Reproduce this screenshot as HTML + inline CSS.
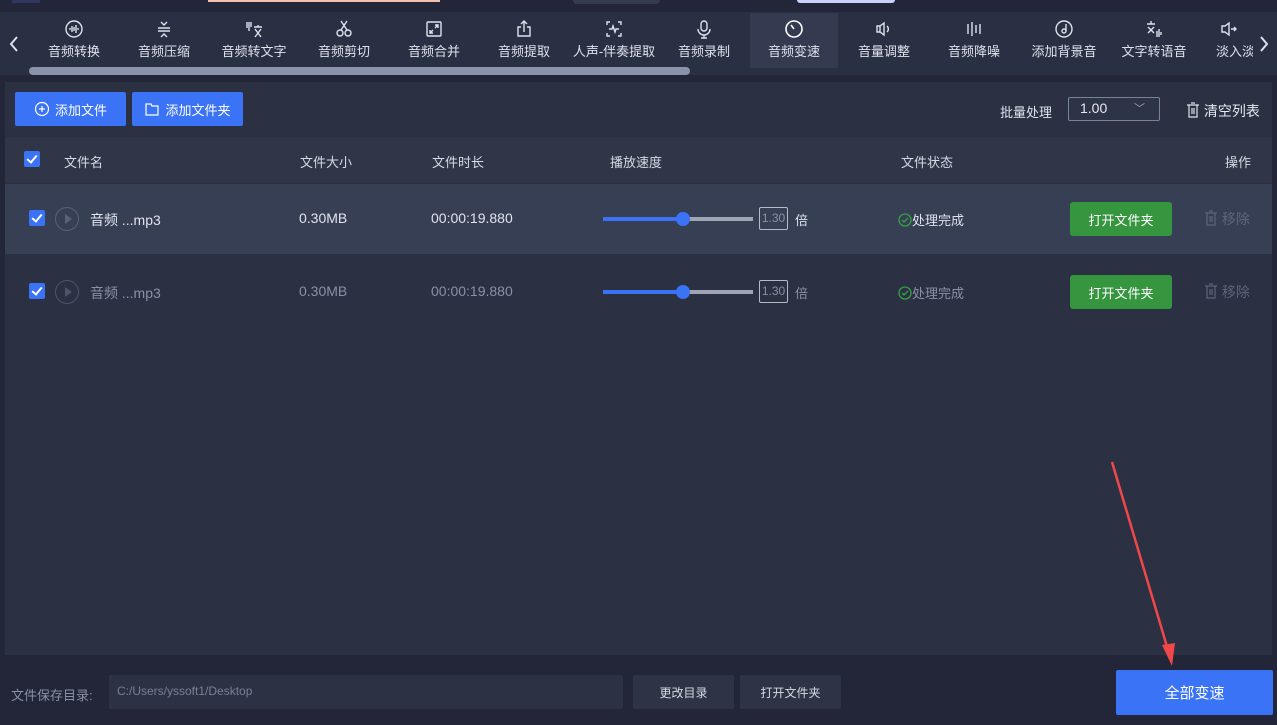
<!DOCTYPE html><html><head><meta charset="utf-8"><style>
*{margin:0;padding:0;box-sizing:border-box}
body{width:1277px;height:725px;background:#222638;font-family:"Liberation Sans","Noto Sans CJK SC",sans-serif;position:relative;overflow:hidden;color:#e6e9f0;font-size:13px;white-space:nowrap}
.a{position:absolute}
.tb{left:0;top:12px;width:1277px;height:63px;background:#2a3044}
.it{position:absolute;top:13px;width:90px;height:56px;text-align:center;color:#dde2ec;font-size:13px}
.it svg{display:block;margin:6px auto 2px}
.sel{background:#343b50}
.panel{left:5px;top:82px;width:1267px;height:573px;background:#2b3043}
.btn{background:#3a73f5;color:#fff;border-radius:2px;font-size:13px;display:flex;align-items:center;justify-content:center}
.cb{width:16px;height:16px;background:#3a73f5;border-radius:2px}
.cb:after{content:"";position:absolute;left:5px;top:2px;width:4px;height:8px;border:solid #fff;border-width:0 2px 2px 0;transform:rotate(40deg)}
.hd{color:#d5dae4;font-size:13px}
.green{background:#35963f;color:#fff;border-radius:3px;display:flex;align-items:center;justify-content:center;font-size:13px}
.gb{background:#2e3346;border-radius:2px;display:flex;align-items:center;justify-content:center;font-size:12px;color:#d5dae4}
</style></head><body>
<div class="a" style="left:12px;top:0;width:28px;height:3px;background:#2f3760"></div>
<div class="a" style="left:208px;top:0;width:232px;height:2px;background:#f3c0b0"></div>
<div class="a" style="left:573px;top:0;width:87px;height:4px;background:#363b4e;border-radius:0 0 4px 4px"></div>
<div class="a" style="left:797px;top:0;width:98px;height:3px;background:#c8d2fb;border-radius:0 0 4px 4px"></div>
<div class="a tb"></div>
<svg class="a" style="left:8px;top:35px" width="12" height="18" viewBox="0 0 12 18" fill="none" stroke="#dde2ec" stroke-width="2"><path d="M9 2L3 9l6 7"/></svg>
<svg class="a" style="left:1258px;top:35px" width="12" height="18" viewBox="0 0 12 18" fill="none" stroke="#dde2ec" stroke-width="2"><path d="M3 2l6 7-6 7"/></svg>
<div class="it" style="left:29px"><svg width="20" height="20" viewBox="0 0 20 20" fill="none" stroke="#dde2ec" stroke-width="1.4"><circle cx="10" cy="10" r="8"/><path d="M6 9v2M8 7v6M10 8v4M12 6v8M14 9v2"/></svg>音频转换</div>
<div class="it" style="left:119px"><svg width="20" height="20" viewBox="0 0 20 20" fill="none" stroke="#dde2ec" stroke-width="1.4"><path d="M4 9h12M4 12h12M7 3l3 3 3-3M7 18l3-3 3 3"/></svg>音频压缩</div>
<div class="it" style="left:209px"><svg width="20" height="20" viewBox="0 0 20 20" fill="none" stroke="#dde2ec" stroke-width="1.4"><path d="M3 3v6M5 3v9M7 3v5M10 8h8M14 6v2M11 10l6 8M17 10l-6 8"/></svg>音频转文字</div>
<div class="it" style="left:299px"><svg width="20" height="20" viewBox="0 0 20 20" fill="none" stroke="#dde2ec" stroke-width="1.4"><circle cx="6" cy="14" r="3"/><circle cx="14" cy="14" r="3"/><path d="M7 11L13 2M13 11L7 2"/></svg>音频剪切</div>
<div class="it" style="left:389px"><svg width="20" height="20" viewBox="0 0 20 20" fill="none" stroke="#dde2ec" stroke-width="1.4"><rect x="3" y="3" width="14" height="14" rx="1"/><path d="M6 14l3-3M6 11v3h3M14 6l-3 3M14 9V6h-3"/></svg>音频合并</div>
<div class="it" style="left:479px"><svg width="20" height="20" viewBox="0 0 20 20" fill="none" stroke="#dde2ec" stroke-width="1.4"><path d="M7 8H4v9h12V8h-3M10 13V2M7 5l3-3 3 3"/></svg>音频提取</div>
<div class="it" style="left:569px"><svg width="20" height="20" viewBox="0 0 20 20" fill="none" stroke="#dde2ec" stroke-width="1.4"><path d="M3 6V3h3M14 3h3v3M3 14v3h3M14 17h3v-3M5 10h3l1-3 2 6 1-3h3"/></svg>人声-伴奏提取</div>
<div class="it" style="left:659px"><svg width="20" height="20" viewBox="0 0 20 20" fill="none" stroke="#dde2ec" stroke-width="1.4"><rect x="7" y="2" width="6" height="10" rx="3"/><path d="M4 10a6 6 0 0012 0M10 16v3M7 19h6"/></svg>音频录制</div>
<div class="it sel" style="left:750px;width:88px;top:13px;height:55px"><svg width="20" height="20" viewBox="0 0 20 20" fill="none" stroke="#fff" stroke-width="1.6"><circle cx="10" cy="10" r="8"/><path d="M7 6l3 4"/></svg>音频变速</div>
<div class="it" style="left:839px"><svg width="20" height="20" viewBox="0 0 20 20" fill="none" stroke="#dde2ec" stroke-width="1.4"><path d="M3 7h3l4-3v12l-4-3H3zM13 7a4 4 0 010 6M6 7v6"/></svg>音量调整</div>
<div class="it" style="left:929px"><svg width="20" height="20" viewBox="0 0 20 20" fill="none" stroke="#dde2ec" stroke-width="1.4"><path d="M4 5v10M8 3v14M12 6v8M16 5v10"/></svg>音频降噪</div>
<div class="it" style="left:1019px"><svg width="20" height="20" viewBox="0 0 20 20" fill="none" stroke="#dde2ec" stroke-width="1.4"><circle cx="10" cy="10" r="8"/><circle cx="10" cy="12" r="2"/><path d="M12 12V5"/></svg>添加背景音</div>
<div class="it" style="left:1109px"><svg width="20" height="20" viewBox="0 0 20 20" fill="none" stroke="#dde2ec" stroke-width="1.4"><path d="M3 5h8M7 2v3M4 8l6 6M10 8l-6 6M13 12v6M15 10v8M17 13v3"/></svg>文字转语音</div>
<div class="it" style="left:1199px;width:54px;overflow:hidden;text-align:left;padding-left:17px"><svg width="20" height="20" viewBox="0 0 20 20" fill="none" stroke="#dde2ec" stroke-width="1.4" style="margin-left:3px"><path d="M3 7h3l4-3v12l-4-3H3zM12 10h5M15 8l2 2-2 2"/></svg>淡入淡出</div>
<div class="a" style="left:29px;top:67px;width:661px;height:8px;border-radius:4px;background:#8a93a8"></div>
<div class="a panel"></div>
<div class="a btn" style="left:15px;top:92px;width:111px;height:34px"><svg width="16" height="16" viewBox="0 0 16 16" fill="none" stroke="#fff" stroke-width="1.2" style="margin-right:5px"><circle cx="8" cy="8" r="6.5"/><path d="M8 5v6M5 8h6"/></svg>添加文件</div>
<div class="a btn" style="left:132px;top:92px;width:111px;height:34px"><svg width="16" height="16" viewBox="0 0 16 16" fill="none" stroke="#fff" stroke-width="1.2" style="margin-right:5px"><path d="M2 3h5l1 2h6v9H2z"/></svg>添加文件夹</div>
<div class="a" style="left:1000px;top:102px;color:#dde2ec">批量处理</div>
<div class="a" style="left:1068px;top:97px;width:92px;height:24px;border:1px solid #7a8296;border-radius:2px;background:#2e3447;padding:2px 0 0 11px;font-size:14px">1.00<span style="position:absolute;right:14px;top:2px;color:#9aa2b6;font-size:11px">﹀</span></div>
<div class="a" style="left:1186px;top:101px;font-size:14px"><svg width="14" height="16" viewBox="0 0 14 16" fill="none" stroke="#dde2ec" stroke-width="1.2" style="vertical-align:-2px"><path d="M1 3h12M5 1h4M3 3v12h8V3M6 6v6M8 6v6"/></svg> 清空列表</div>
<div class="a" style="left:5px;top:137px;width:1267px;height:46px;background:#303548"></div>
<div class="a cb" style="left:24px;top:151px"></div>
<div class="a hd" style="left:64px;top:152px">文件名</div>
<div class="a hd" style="left:300px;top:152px">文件大小</div>
<div class="a hd" style="left:432px;top:152px">文件时长</div>
<div class="a hd" style="left:610px;top:152px">播放速度</div>
<div class="a hd" style="left:901px;top:152px">文件状态</div>
<div class="a hd" style="left:1225px;top:152px">操作</div>
<div class="a" style="left:5px;top:184px;width:1267px;height:70px;background:#373f54"></div>
<div class="a cb" style="left:29px;top:210px"></div>
<div class="a" style="left:55px;top:207px;width:24px;height:24px;border:1px solid #5a6175;border-radius:50%"><div style="position:absolute;left:9px;top:6px;border-left:7px solid #5a6175;border-top:5px solid transparent;border-bottom:5px solid transparent"></div></div>
<div class="a" style="left:90px;top:210px;color:#e0e4ee;font-size:14px">音频 ...mp3</div>
<div class="a" style="left:299px;top:210px;color:#e0e4ee;font-size:14px">0.30MB</div>
<div class="a" style="left:431px;top:210px;color:#e0e4ee;font-size:14px">00:00:19.880</div>
<div class="a cb" style="left:29px;top:283px"></div>
<div class="a" style="left:55px;top:280px;width:24px;height:24px;border:1px solid #4e5568;border-radius:50%"><div style="position:absolute;left:9px;top:6px;border-left:7px solid #4e5568;border-top:5px solid transparent;border-bottom:5px solid transparent"></div></div>
<div class="a" style="left:90px;top:283px;color:#8a91a4;font-size:14px">音频 ...mp3</div>
<div class="a" style="left:299px;top:283px;color:#8a91a4;font-size:14px">0.30MB</div>
<div class="a" style="left:431px;top:283px;color:#8a91a4;font-size:14px">00:00:19.880</div>
<div class="a" style="left:603px;top:217px;width:80px;height:4px;background:#3a73f5"></div>
<div class="a" style="left:683px;top:217px;width:70px;height:4px;background:#9ea5b4"></div>
<div class="a" style="left:676px;top:212px;width:14px;height:14px;border-radius:50%;background:#3a73f5"></div>
<div class="a" style="left:759px;top:207px;width:29px;height:23px;border:1px solid #b4bac6;border-radius:2px;color:#8a91a4;font-size:12px;text-align:center;line-height:21px">1.30</div>
<div class="a" style="left:795px;top:210px;color:#dde2ec">倍</div>
<div class="a" style="left:603px;top:290px;width:80px;height:4px;background:#3a73f5"></div>
<div class="a" style="left:683px;top:290px;width:70px;height:4px;background:#9ea5b4"></div>
<div class="a" style="left:676px;top:285px;width:14px;height:14px;border-radius:50%;background:#3a73f5"></div>
<div class="a" style="left:759px;top:280px;width:29px;height:23px;border:1px solid #b4bac6;border-radius:2px;color:#8a91a4;font-size:12px;text-align:center;line-height:21px">1.30</div>
<div class="a" style="left:795px;top:283px;color:#8a91a4">倍</div>
<div class="a" style="left:898px;top:210px;color:#dde2ec"><svg width="14" height="14" viewBox="0 0 14 14" fill="none" stroke="#35a043" stroke-width="1.3" style="vertical-align:-2px"><circle cx="7" cy="7" r="6"/><path d="M4 7l2 2 4-4"/></svg>处理完成</div>
<div class="a" style="left:898px;top:283px;color:#8a91a4"><svg width="14" height="14" viewBox="0 0 14 14" fill="none" stroke="#35a043" stroke-width="1.3" style="vertical-align:-2px"><circle cx="7" cy="7" r="6"/><path d="M4 7l2 2 4-4"/></svg>处理完成</div>
<div class="a green" style="left:1070px;top:202px;width:102px;height:34px">打开文件夹</div>
<div class="a green" style="left:1070px;top:275px;width:102px;height:34px">打开文件夹</div>
<div class="a" style="left:1204px;top:209px;color:#5e6579;font-size:14px"><svg width="14" height="16" viewBox="0 0 14 16" fill="none" stroke="#5e6579" stroke-width="1.2" style="vertical-align:-2px"><path d="M1 3h12M5 1h4M3 3v12h8V3M6 6v6M8 6v6"/></svg> 移除</div>
<div class="a" style="left:1204px;top:282px;color:#5e6579;font-size:14px"><svg width="14" height="16" viewBox="0 0 14 16" fill="none" stroke="#5e6579" stroke-width="1.2" style="vertical-align:-2px"><path d="M1 3h12M5 1h4M3 3v12h8V3M6 6v6M8 6v6"/></svg> 移除</div>
<div class="a" style="left:11px;top:685px;color:#8a91a4;font-size:13px">文件保存目录:</div>
<div class="a" style="left:109px;top:675px;width:514px;height:34px;background:#2c3144;border-radius:2px;color:#7a8194;font-size:12px;padding:9px 0 0 8px">C:/Users/yssoft1/Desktop</div>
<div class="a gb" style="left:633px;top:675px;width:101px;height:34px">更改目录</div>
<div class="a gb" style="left:740px;top:675px;width:101px;height:34px">打开文件夹</div>
<div class="a btn" style="left:1116px;top:670px;width:157px;height:45px;font-size:15px">全部变速</div>
<svg class="a" style="left:1100px;top:460px" width="90" height="212" viewBox="0 0 90 212"><path d="M12 2L68 190" stroke="#f04848" stroke-width="2.5"/><path d="M62 185l10 21 3-23z" fill="#f04848"/></svg>
</body></html>
